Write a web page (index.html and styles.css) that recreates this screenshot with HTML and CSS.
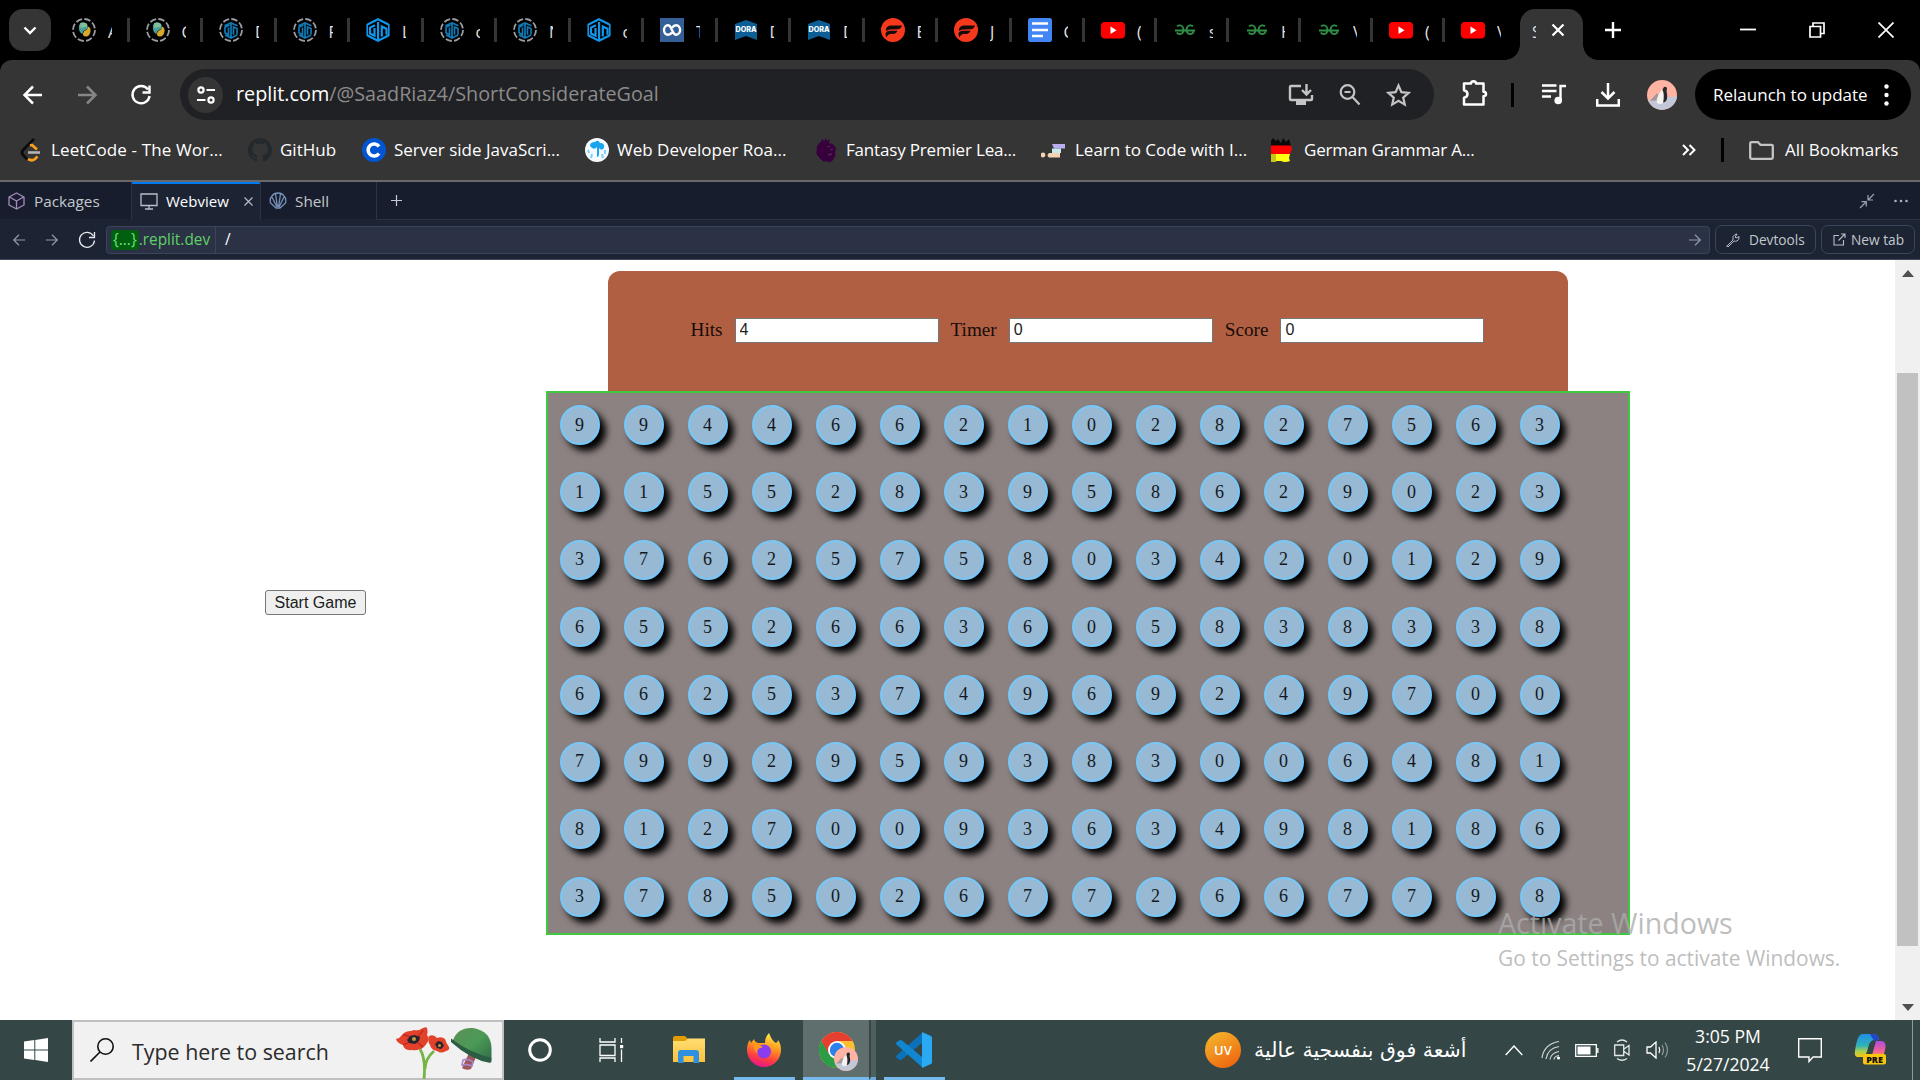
FILE: index.html
```html
<!DOCTYPE html>
<html lang="en">
<head>
<meta charset="utf-8">
<title>ShortConsiderateGoal</title>
<link rel="stylesheet" href="styles.css">
</head>
<body>
<svg class="defs" width="0" height="0">
  <defs>
    <linearGradient id="gPy" x1="0" y1="0" x2="1" y2="1"><stop offset="0" stop-color="#6fb36a"/><stop offset=".5" stop-color="#2f8fb0"/><stop offset=".6" stop-color="#e0b020"/><stop offset="1" stop-color="#c9a018"/></linearGradient>
    <linearGradient id="gUv" x1="0.2" y1="0" x2=".8" y2="1"><stop offset="0" stop-color="#f3b52d"/><stop offset="1" stop-color="#f0620c"/></linearGradient>
    <linearGradient id="gFox" x1=".7" y1="0" x2=".4" y2="1"><stop offset="0" stop-color="#fff04a"/><stop offset=".4" stop-color="#ff9a1f"/><stop offset=".75" stop-color="#ff3b42"/><stop offset="1" stop-color="#e5178b"/></linearGradient>
    <linearGradient id="gFolder" x1="0" y1="0" x2="0" y2="1"><stop offset="0" stop-color="#ffdd72"/><stop offset="1" stop-color="#f9c33c"/></linearGradient>
    <linearGradient id="gHelm" x1="0" y1="0" x2="1" y2="1"><stop offset="0" stop-color="#5c8f58"/><stop offset=".5" stop-color="#4c9a55"/><stop offset="1" stop-color="#2f6b48"/></linearGradient>
    <linearGradient id="gCoA" x1="0" y1="0" x2="0" y2="1"><stop offset="0" stop-color="#1f8fe8"/><stop offset=".5" stop-color="#2fb3b8"/><stop offset=".75" stop-color="#a8cf50"/><stop offset="1" stop-color="#f5c518"/></linearGradient>
    <linearGradient id="gCoB" x1="0" y1="0" x2="0" y2="1"><stop offset="0" stop-color="#b04be0"/><stop offset=".6" stop-color="#f0609a"/><stop offset="1" stop-color="#f7a04a"/></linearGradient>
    <symbol id="py" viewBox="0 0 24 24"><circle cx="12" cy="12" r="11" fill="none" stroke="#9a9da3" stroke-width="1.8" stroke-dasharray="6.4 2.24"/><path d="M8 5.500q3-2 7 .5l1 4.500-3 1.500q-2.500 1-2.500 4-3-1-3.500-5-.5-4 1-5.500z" fill="#4a9f9a"/><path d="M8 5.500q3-2 7 .5l.5 2.500-7 1.500z" fill="#7fbf9a"/><path d="M16 8.500q3 1 2.500 5-1 5-4.500 5t-3-3q.5-3 3-3.500 2-.5 2-3.500z" fill="#d6a92b"/></symbol>
    <symbol id="ringct" viewBox="0 0 24 24"><circle cx="12" cy="12" r="11" fill="none" stroke="#9a9da3" stroke-width="1.8" stroke-dasharray="6.4 2.24"/><path d="M10.500 7 6 9.200v5.600l3.500 2V9.500M12 5v14M14.500 16.800V9l3.500 1.500v6M5.500 7.800 12 5l6.500 2.800M6 17l6 3 6-3" fill="none" stroke="#0f7ab5" stroke-width="1.700"/></symbol>
    <symbol id="ct" viewBox="0 0 24 24"><path d="M9 7.200 4 9.600v6l4.500 2.200V10M12.100 4v18M15.800 18.500V8.500l4.700 2.300v6M1.500 6.500 12 1.300l10.500 5.200M1.500 17.500l10.500 5.200 10.500-5.200" fill="none" stroke="#1196ea" stroke-width="2.200"/><path d="M1.200 6v12M22.800 6v12" stroke="#1196ea" stroke-width="1.600"/></symbol>
    <symbol id="loop" viewBox="0 0 24 24"><path fill="#355f97" d="M0 0h24v24H0z"/><path d="M12 14.500C11 16 9.800 16.700 8 16.700c-2.400 0-4-2-4-4.600s1.600-4.800 4-4.800c4 0 4 9.400 8.200 9.400 2.300 0 3.900-2.100 3.900-4.600s-1.600-4.800-3.900-4.800c-1.800 0-3 .8-4 2.400" fill="none" stroke="#fff" stroke-width="2.400"/></symbol>
    <symbol id="dora" viewBox="0 0 24 24"><path d="M1 6 12 2l11 4v16l-11-4-11 4z" fill="#0c5f96"/><text x="12" y="14" font-size="7.200" font-weight="800" text-anchor="middle" fill="#fff" font-family="Inter,sans-serif">DORA</text></symbol>
    <symbol id="flash" viewBox="0 0 24 24"><circle cx="12" cy="12" r="12" fill="#f6391d"/><path d="M5 11q1-3.500 5-3.500h11q-1 3.500-4.500 3.700L9 11.500q-2 0-4 1.500zM4.500 15q1.500-2.300 4.500-2.300h7.500q-1 3-4.500 3.300H9q-2 0-4 3.500z" fill="#150a0a"/></symbol>
    <symbol id="docs" viewBox="0 0 24 24"><rect width="24" height="24" rx="2.500" fill="#4285f4"/><path d="M4 5.500h16M4 12h16M4 18h11" stroke="#fff" stroke-width="2.600"/></symbol>
    <symbol id="yt" viewBox="0 0 24 24"><rect y="4" width="24" height="16.500" rx="4" fill="#f00"/><path d="m9.500 8.500 6 3.700-6 3.700z" fill="#fff"/></symbol>
    <symbol id="gfg" viewBox="0 0 24 24"><path d="M2 12.500h20M4 8.200c2-1.500 5-1 6 1.300.8 2 .5 4.500-.8 5.700-1.600 1.400-4.500 1-5.500-.7M20 8.200c-2-1.500-5-1-6 1.300-.8 2-.5 4.500.8 5.700 1.600 1.400 4.500 1 5.500-.7v-2" fill="none" stroke="#2f8d46" stroke-width="1.800"/></symbol>
    <symbol id="back" viewBox="0 0 24 24"><path d="M21 12H4M12 3.500 3.500 12l8.500 8.500" fill="none" stroke="currentColor" stroke-width="2.500"/></symbol>
    <symbol id="fwd" viewBox="0 0 24 24"><path d="M3 12h17M12 3.500l8.500 8.500-8.500 8.500" fill="none" stroke="currentColor" stroke-width="2.500"/></symbol>
    <symbol id="reload" viewBox="0 0 24 24"><path d="M19 6.500A8.600 8.600 0 1 0 20.600 13M20.500 2.500v7h-7" fill="none" stroke="currentColor" stroke-width="2.400"/></symbol>
    <symbol id="thinback" viewBox="0 0 16 16"><path d="M15 8H2M8 2 2 8l6 6" fill="none" stroke="currentColor" stroke-width="1.400"/></symbol>
    <symbol id="thinfwd" viewBox="0 0 16 16"><path d="M1 8h13M8 2l6 6-6 6" fill="none" stroke="currentColor" stroke-width="1.400"/></symbol>
    <symbol id="penguin" viewBox="0 0 30 30"><circle cx="15" cy="15" r="15" fill="#ffb3a3"/><path d="M1 20 30 16A15 15 0 0 1 1 20z" fill="#c3c8d8"/><path d="m3 21 7-8 4 7z" fill="#a5989a"/><path d="M14 23q2-4 1-10 0-4 2-6 3-1 3 2-1 2 0 5 1 5-2 8z" fill="#26282b"/><path d="M10 23q-1-4 2-9 2-3 3-5 3 5 1 14-3 2-6 0z" fill="#f4f1ef"/></symbol>
  </defs>
</svg>

<header class="tabstrip">
  <div class="tab-search"><svg width="14" height="9" viewBox="0 0 14 9"><path d="M1.500 1.500 7 7l5.500-5.500" fill="none" stroke="#fff" stroke-width="2.400"/></svg></div>
  <nav class="tabs">
    <div class="tab"><svg><use href="#py"/></svg><span>A</span></div>
    <div class="tab"><svg><use href="#py"/></svg><span>C</span></div>
    <div class="tab"><svg><use href="#ringct"/></svg><span>D</span></div>
    <div class="tab"><svg><use href="#ringct"/></svg><span>F</span></div>
    <div class="tab"><svg><use href="#ct"/></svg><span>L</span></div>
    <div class="tab"><svg><use href="#ringct"/></svg><span>c</span></div>
    <div class="tab"><svg><use href="#ringct"/></svg><span>N</span></div>
    <div class="tab"><svg><use href="#ct"/></svg><span>c</span></div>
    <div class="tab"><svg><use href="#loop"/></svg><span>T</span></div>
    <div class="tab"><svg><use href="#dora"/></svg><span>D</span></div>
    <div class="tab"><svg><use href="#dora"/></svg><span>D</span></div>
    <div class="tab"><svg><use href="#flash"/></svg><span>E</span></div>
    <div class="tab"><svg><use href="#flash"/></svg><span>J</span></div>
    <div class="tab"><svg><use href="#docs"/></svg><span>C</span></div>
    <div class="tab slim"><svg><use href="#yt"/></svg><span>(</span></div>
    <div class="tab slim"><svg><use href="#gfg"/></svg><span>s</span></div>
    <div class="tab slim"><svg><use href="#gfg"/></svg><span>H</span></div>
    <div class="tab slim"><svg><use href="#gfg"/></svg><span>V</span></div>
    <div class="tab slim"><svg><use href="#yt"/></svg><span>(</span></div>
    <div class="tab slim last"><svg><use href="#yt"/></svg><span>V</span></div>
  </nav>
  <div class="tab-active"><span>S</span><svg width="14" height="14" viewBox="0 0 14 14"><path d="m1.500 1.500 11 11m0-11-11 11" stroke="#fff" stroke-width="2.200"/></svg></div>
  <svg class="newtab" width="18" height="18" viewBox="0 0 18 18"><path d="M9 1v16M1 9h16" stroke="#fff" stroke-width="2.400"/></svg>
  <div class="winbtns">
    <svg width="16" height="16" viewBox="0 0 16 16"><path d="M0 7.500h16" stroke="#fff" stroke-width="1.800"/></svg>
    <svg width="16" height="16" viewBox="0 0 16 16"><path d="M1 4.500h10.500V15H1zM4 4V1h11v10.500h-3" fill="none" stroke="#fff" stroke-width="1.700"/></svg>
    <svg width="16" height="16" viewBox="0 0 16 16"><path d="m.5.500 15 15m0-15-15 15" stroke="#fff" stroke-width="1.700"/></svg>
  </div>
</header>

<section class="chrome">
  <div class="toolbar">
    <div class="nav">
      <svg class="i24"><use href="#back"/></svg>
      <svg class="i24 dim"><use href="#fwd"/></svg>
      <svg class="i24"><use href="#reload"/></svg>
    </div>
    <div class="omnibox">
      <div class="site"><svg width="20" height="20" viewBox="0 0 20 20"><g fill="none" stroke="#fff" stroke-width="2.200"><circle cx="5" cy="5" r="2.600"/><path d="M10.500 5H19M1 15h8.500"/><circle cx="15" cy="15" r="2.600"/></g></svg></div>
      <div class="url"><span class="t"><b>replit.com</b>/@SaadRiaz4/ShortConsiderateGoal</span></div>
      <div class="omni-icons">
        <svg width="26" height="24" viewBox="0 0 26 24"><path d="M13 3H3q-1 0-1 1v12q0 1 1 1h20q1 0 1-1v-4M18.500 1v10M14 7l4.500 4.500L23 7" fill="none" stroke="#c4c4c4" stroke-width="2.400"/><path d="M8 18h10v4H8z" fill="#c4c4c4"/></svg>
        <svg width="24" height="24" viewBox="0 0 24 24"><circle cx="9.500" cy="9" r="6.800" fill="none" stroke="#c4c4c4" stroke-width="2.200"/><path d="m14.500 14 7 7.500M6.500 9h6" stroke="#c4c4c4" stroke-width="2.200"/></svg>
        <svg width="25" height="24" viewBox="0 0 25 24"><path d="m12.500 2.500 2.900 6.600 7.200.7-5.400 4.800 1.600 7-6.300-3.700-6.300 3.700 1.600-7-5.400-4.800 7.200-.7z" fill="none" stroke="#c4c4c4" stroke-width="2.200"/></svg>
      </div>
    </div>
    <div class="right-tools">
      <svg class="puzzle" width="26" height="28" viewBox="0 0 26 28"><path d="M2 4.500h7q0-2 2.500-2.200Q14 2.500 14 4.500h7.500v8.300q2.500.2 2.500 2.200t-2.500 2.200v8.300H2v-6.700q3.500-.8 3.500-3.800T2 11.200z" fill="none" stroke="#fff" stroke-width="2.500" stroke-linejoin="round"/></svg>
      <i class="vbar"></i>
      <svg class="media" width="24" height="24" viewBox="0 0 24 24"><path d="M0 2.500h14.500M0 8h14.500M0 13.500h9M18.500 17V3H24" fill="none" stroke="#fff" stroke-width="2.400"/><circle cx="16.200" cy="17.500" r="3.800" fill="#fff"/></svg>
      <svg class="dl" width="24" height="24" viewBox="0 0 24 24"><path d="M12 0v15M5.500 9l6.500 6.500L18.500 9M1.200 16v6.500h21.600V16" fill="none" stroke="#fff" stroke-width="2.500"/></svg>
      <svg class="avatar" width="30" height="30"><use href="#penguin"/></svg>
      <div class="relaunch"><span class="t">Relaunch to update</span><svg width="5" height="22" viewBox="0 0 5 22"><g fill="#fff"><circle cx="2.500" cy="2.500" r="2.200"/><circle cx="2.500" cy="11" r="2.200"/><circle cx="2.500" cy="19.500" r="2.200"/></g></svg></div>
    </div>
  </div>
  <div class="bookmarks">
    <a class="bm b1"><svg width="24" height="24" viewBox="0 0 24 24"><path d="M15 1 4.500 11.500q-3 3 0 6l4 4" fill="none" stroke="#0b0b0b" stroke-width="2.800"/><path d="m11 7.500 2-.5 5 4.500M9 21q4 2.500 7 0l2.500-2.500" fill="none" stroke="#f89f1b" stroke-width="2.700"/><path d="M9 14.500h12" stroke="#b3b3b3" stroke-width="2.600"/></svg><span class="t">LeetCode - The Wor...</span></a>
    <a class="bm b2"><svg width="24" height="24" viewBox="0 0 16 16"><path fill="#24292e" d="M8 0C3.580 0 0 3.580 0 8c0 3.540 2.290 6.530 5.470 7.590.4.070.55-.17.55-.38 0-.19-.01-.82-.01-1.490-2.010.37-2.530-.49-2.690-.94-.09-.23-.48-.94-.82-1.130-.28-.15-.68-.52-.01-.53.63-.01 1.080.58 1.230.82.72 1.210 1.870.87 2.330.66.07-.52.28-.87.51-1.070-1.780-.2-3.640-.89-3.640-3.950 0-.87.31-1.590.82-2.150-.08-.2-.36-1.020.08-2.120 0 0 .67-.21 2.200.82.64-.18 1.320-.27 2-.27s1.360.09 2 .27c1.530-1.040 2.200-.82 2.200-.82.44 1.100.16 1.920.08 2.120.51.56.82 1.270.82 2.150 0 3.070-1.870 3.750-3.650 3.950.29.25.54.73.54 1.480 0 1.070-.01 1.930-.01 2.200 0 .21.15.46.55.38A8.010 8.010 0 0 0 16 8c0-4.420-3.580-8-8-8z"/></svg><span class="t">GitHub</span></a>
    <a class="bm b3"><svg width="24" height="24" viewBox="0 0 24 24"><circle cx="12" cy="12" r="12" fill="#0056d2"/><path d="M17 8.500a6 6 0 1 0 0 7" fill="none" stroke="#fff" stroke-width="3.600"/></svg><span class="t">Server side JavaScri...</span></a>
    <a class="bm b4"><svg width="24" height="24" viewBox="0 0 24 24"><circle cx="12" cy="12" r="12" fill="#f4fafd"/><path d="M5 8q0-4 5-4 3-3 5 1 5 0 4 5-3 3-5 0v6q0 3-2 3V9q-3 4-7-1z" fill="#18a5ee"/><path d="m7 16-1 4m11-4 1 4M3 12l1 3m16-3v4" stroke="#7cd0f7" stroke-width="2"/></svg><span class="t">Web Developer Roa...</span></a>
    <a class="bm b5"><svg width="24" height="24" viewBox="0 0 24 24"><path d="m8 1 2 2 2-3 1 3 3-2-1 4q6 1 7 6l-1 3q1 5-1 6-2 5-6 4l-2-1q-2 2-4-1-2 0-3-3-4-3-2-7-1-3 1-5 0-2 3-3z" fill="#37003c"/><path d="m13 9 3-1m0 4 3-1m-5 6 4-1" stroke="#4b2b4e" stroke-width="1.300"/></svg><span class="t snug">Fantasy Premier Lea...</span></a>
    <a class="bm b6"><svg width="24" height="24" viewBox="0 0 24 24"><path d="M11 6h13v4.500H13z" fill="#b9adf2"/><path d="M11 10.500h9V15h-9z" fill="#c8e8ea"/><path d="M8 15h11v4.500H8q-3-2 0-4.500z" fill="#f5d2b3"/><circle cx="2" cy="17" r="2.400" fill="#f5d2b3"/></svg><span class="t">Learn to Code with I...</span></a>
    <a class="bm b7"><svg width="21" height="24" viewBox="0 0 21 24"><path d="m2 0 3 3 2-2 3 4 2-5 3 4 3-3 2 7H0V3z" fill="#0a0a0a"/><path d="M0 7.500h20l1 4-2 4.500H0z" fill="#f00"/><path d="M0 16h19l-1 4 1 3q-5 2-9 0H0z" fill="#ff1"/><path d="M0 16h5v8H0z" fill="#c7c516"/></svg><span class="t snug">German Grammar A...</span></a>
    <div class="bm-end">
      <svg width="14" height="12" viewBox="0 0 14 12"><path d="m1 1 5 5-5 5m6.500-10 5 5-5 5" fill="none" stroke="#fff" stroke-width="2"/></svg>
      <i class="vbar"></i>
      <svg class="folder" width="25" height="19" viewBox="0 0 25 19"><path d="M1.200 16.500V2.500q0-1.300 1.300-1.300H9l2.500 2.600H22.500q1.300 0 1.300 1.300v11.400q0 1.300-1.300 1.300h-20q-1.300 0-1.300-1.300z" fill="none" stroke="#c4c4c4" stroke-width="2.300"/></svg>
      <span class="t">All Bookmarks</span>
    </div>
  </div>
</section>

<section class="panes">
  <div class="pane p-pack"><svg width="17" height="18" viewBox="0 0 17 18"><path d="M8.500 1 1 5v8l7.500 4 7.500-4V5zM1.500 5l7 4 7-4M8.500 9v8" fill="none" stroke="#a78bbf" stroke-width="1.300" stroke-linejoin="round"/></svg><span class="t">Packages</span></div>
  <div class="pane p-web"><svg width="18" height="17" viewBox="0 0 18 17"><path d="M1 1h16v11.500H1zM5 16h8M9 13v3" fill="none" stroke="#b9bec9" stroke-width="1.300"/></svg><span class="t">Webview</span><svg class="x" width="9" height="9" viewBox="0 0 9 9"><path d="m.5.500 8 8m0-8-8 8" stroke="#b9bec9" stroke-width="1.100"/></svg></div>
  <div class="pane p-shell"><svg width="18" height="17" viewBox="0 0 18 17"><path d="M7 16 1.500 11Q.5 6 3 4q2-3 6-3t6 3q2.500 2 1.500 7L11 16zM8 15 3 5M8.500 15 6.500 2M9.500 15l2-13M10 15l5-10" fill="none" stroke="#7791b8" stroke-width="1.300"/></svg><span class="t">Shell</span></div>
  <div class="pane-rest">
    <svg width="11" height="11" viewBox="0 0 11 11"><path d="M5.500 0v11M0 5.500h11" stroke="#c5cad4" stroke-width="1.200"/></svg>
    <svg class="shrink" width="16" height="16" viewBox="0 0 16 16"><path d="M1 15l6-6M2.500 8.700h4.800v4.800M15 1 9.500 6.500M14 7H9V2" fill="none" stroke="#9ba2b2" stroke-width="1.200"/></svg>
    <svg class="dots" width="14" height="4" viewBox="0 0 14 4"><g fill="#a9afbd"><circle cx="1.500" cy="2" r="1.300"/><circle cx="7" cy="2" r="1.300"/><circle cx="12.500" cy="2" r="1.300"/></g></svg>
  </div>
</section>

<section class="address">
  <div class="anav">
    <svg width="14" height="14"><use href="#thinback"/></svg>
    <svg width="14" height="14"><use href="#thinfwd"/></svg>
    <svg class="bright" width="18" height="18" viewBox="0 0 18 18"><path d="M15.500 5A7.500 7.500 0 1 0 16.500 9.500M16.500 1v5.500H11" fill="none" stroke="currentColor" stroke-width="1.300"/></svg>
  </div>
  <div class="afield">
    <div class="host"><span class="t"><em>{...}</em>.replit.dev</span></div>
    <div class="path">/</div>
    <svg width="14" height="14"><use href="#thinfwd"/></svg>
  </div>
  <div class="btn b-dev"><svg width="14" height="14" viewBox="0 0 14 14"><path d="m1 13 6-6q-1-4 2-5.500l2-.5-1.800 3 .8 1 3-1.500q.5 3.500-2 4.500-1.500.5-3 0l-6 6q-2 0-1-1z" fill="none" stroke="#b9bec9" stroke-width="1"/></svg><span class="t">Devtools</span></div>
  <div class="btn b-new"><svg width="13" height="13" viewBox="0 0 13 13"><path d="M6 2.500H1V12h9.500V7M8 1h4v4M12 1 5.500 7.500" fill="none" stroke="#b9bec9" stroke-width="1.100"/></svg><span class="t">New tab</span></div>
</section>

<main class="webview">
  <div class="page">
    <div class="side"><button class="start">Start Game</button></div>
    <div class="game">
      <div class="stats">
        <label>Hits</label><input value="4">
        <label>Timer</label><input value="0">
        <label>Score</label><input value="0">
      </div>
      <div class="board" id="board"></div>
    </div>
    <div class="watermark"><div>Activate Windows</div><p>Go to Settings to activate Windows.</p></div>
  </div>
  <div class="scroll">
    <svg width="12" height="7" viewBox="0 0 12 7"><path d="M6 0 12 7H0z" fill="#505050"/></svg>
    <i class="thumb"></i>
    <svg width="12" height="7" viewBox="0 0 12 7"><path d="M0 0h12L6 7z" fill="#505050"/></svg>
  </div>
</main>

<footer class="taskbar">
  <div class="win"><svg width="24" height="24" viewBox="0 0 24 24"><path fill="#fff" d="M0 3.500 10.300 2v9.500H0zM11.300 1.900 24 0v11.500H11.300zM0 12.500h10.300V22L0 20.500zM11.300 12.500H24V24l-12.700-1.900z"/></svg></div>
  <div class="search">
    <svg width="24" height="24" viewBox="0 0 24 24"><circle cx="15.500" cy="8.500" r="7.700" fill="none" stroke="#111" stroke-width="1.600"/><path d="M10 14 .5 23.500" stroke="#111" stroke-width="1.600"/></svg>
    <span class="t">Type here to search</span>
    <svg class="art" width="98" height="52" viewBox="0 0 98 52"><path d="M24 22q6 10 4 30M38 24q-9 8-9 18" fill="none" stroke="#74b544" stroke-width="2.800"/><path d="M0 12q4-1 6-4 3-4 9-4l3-1q5 1 7-1 5-3 6-1 1 4 0 7 3 4 0 8-4 6-7 6-4 2-8 1-8 1-9-5-6-2-7-6z" fill="#e4412a"/><path d="M7 8q5 0 11 5M27 3q-3 6-9 9M7 18l11-5 9 7" fill="none" stroke="#bb2a1f" stroke-width="1.300"/><path d="m11 13 3-4 5-1 5 2-1 4-4 3-6-1z" fill="#28242f"/><circle cx="18" cy="12" r="2" fill="#c79a3b"/><path d="M33 9q5-2 8 2 5-2 8 1 1 4 4 8 1 3-3 4-5 3-9 0-6-1-7-6-3-5-1-9z" fill="#e4412a"/><path d="m39 17 3-3 4 1 2 4-3 3-4-1z" fill="#28242f"/><circle cx="43.500" cy="18.500" r="1.500" fill="#c79a3b"/><path d="m73 26 7 4-5 12q-5 2-9-1z" fill="#a0575a"/><path d="M67 33q5-2 10 2l-1 4q-5-2-10-1z" fill="none" stroke="#a886cf" stroke-width="1.600"/><path d="M57 13Q62 0 77 1q18 3 18.500 20v14L76 30 57 16z" fill="url(#gHelm)"/><path d="M55 11.500q18 14 40.500 19.500l-1 5Q75 33 55 15z" fill="#2c5c44"/></svg>
  </div>
  <div class="app cort"><svg width="24" height="24" viewBox="0 0 24 24"><circle cx="12" cy="12" r="10.300" fill="none" stroke="#fff" stroke-width="3"/></svg></div>
  <div class="app tv"><svg width="26" height="24" viewBox="0 0 26 24"><path d="M1 0v4h15V0M1 24v-4h15v4M1 7h15v10.500H1zM22.500 0v5M22.500 11.500V24" fill="none" stroke="#fff" stroke-width="1.300"/><path d="M21 7h3.200v3.200H21z" fill="#fff"/></svg></div>
  <div class="app fe"><svg width="32" height="28" viewBox="0 0 32 28"><path d="M0 2q0-2 2-2h10l3 3v4H0z" fill="#e09b07"/><path d="M0 5h12l3-2.500h17V26H0z" fill="url(#gFolder)"/><path d="M5 27V17q0-3 3-3h15q3 0 3 3v10h-5.500v-7h-10v7z" fill="#2f8fe0"/></svg></div>
  <div class="app fx on"><svg width="34" height="34" viewBox="0 0 34 34"><path d="M17 34A17 17 0 0 1 0 17q0-7 3-10l1 3 3-4q1 4 5 4h6q0-6 4-10 3 8 7 10 2-1 2-3 3 4 3 10a17 17 0 0 1-17 17z" fill="url(#gFox)"/><circle cx="17" cy="18.500" r="7" fill="#8a3df0"/><path d="M7 10q5 4 9 3-1 2-4 2.500-3 2-1 5-5-2-4-10z" fill="#ff9a1f"/></svg></div>
  <div class="app ch on"><svg width="40" height="40" viewBox="0 0 40 40"><circle cx="18" cy="18" r="18" fill="#fbc12d"/><path d="M2.400 9A18 18 0 0 1 33.600 9H18L9 22z" fill="#e63e30"/><path d="M2.400 9A18 18 0 0 0 18 36l8-13-16-1z" fill="#2a9d46"/><circle cx="18" cy="18" r="9" fill="#fff"/><circle cx="18" cy="18" r="7.200" fill="#2e80ea"/><svg x="15" y="15" width="24" height="24" viewBox="0 0 30 30"><use href="#penguin" width="30" height="30"/></svg></svg></div>
  <div class="ch-more"></div>
  <div class="app vs on"><svg width="36" height="36" viewBox="0 0 36 36"><path d="M26 1 1 23q-2 2 0 3l2 1.500q1.500 1 3 0L26 11z" fill="#0b72b9"/><path d="M26 35 1 13q-2-2 0-3l2-1.500q1.500-1 3 0L26 25z" fill="#1187d2"/><path d="M26 0l9 4q1 .6 1 2v24q0 1.400-1 2l-9 4z" fill="#2aaaf2"/></svg></div>
  <div class="tray">
    <div class="weather"><svg width="36" height="36" viewBox="0 0 36 36"><circle cx="18" cy="18" r="18" fill="url(#gUv)"/><text x="18" y="22.500" font-size="13" font-weight="600" text-anchor="middle" fill="#fff" font-family="Open Sans,sans-serif">UV</text></svg><span class="t ar" dir="rtl">أشعة فوق بنفسجية عالية</span></div>
    <svg class="chev" width="18" height="11" viewBox="0 0 18 11"><path d="m.7 10 8.300-9 8.300 9" fill="none" stroke="#fff" stroke-width="1.400"/></svg>
    <svg class="wifi" width="20" height="20" viewBox="0 0 20 20"><g fill="none" stroke="#cfd5d5" stroke-width="1.200"><path d="M1 18Q3 4 18 1.500M5 19Q6.500 8.500 18 6.500M9 19.500Q10 13 18 11.500M13 19.500q.5-3.500 5-4"/></g><circle cx="17.500" cy="18" r="1.600" fill="#fff"/></svg>
    <svg class="bat" width="24" height="13" viewBox="0 0 24 13"><path d="M.7.700h20.600v11.600H.7zM22.800 4v5" fill="none" stroke="#fff" stroke-width="1.300"/><path d="M2.500 2.500h13v8h-13z" fill="#fff"/></svg>
    <svg class="meet" width="18" height="22" viewBox="0 0 18 22"><path d="M1.700 6h9v10.500h-9zM11 10l5-3.500v9.500L11 12.500M4 3q5-4 10 0M4 19.500q5 3.500 10 0" fill="none" stroke="#e4e8e8" stroke-width="1.300"/></svg>
    <svg class="spk" width="23" height="18" viewBox="0 0 23 18"><path d="M1 6h3.500L10 1v16l-5.500-5H1z" fill="none" stroke="#fff" stroke-width="1.300"/><path d="M13 6q1.500 3 0 6" fill="none" stroke="#fff" stroke-width="1.200"/><path d="M16 4q3 5 0 10M19 1.500q5 7.500 0 15" fill="none" stroke="#8f9b9b" stroke-width="1.200"/></svg>
    <div class="clock"><span class="t">3:05 PM</span><span class="t">5/27/2024</span></div>
    <svg class="note" width="24" height="25" viewBox="0 0 24 25"><path d="M.7.700h22.600V19H15l-4 4.500V19H.7z" fill="none" stroke="#fff" stroke-width="1.400"/></svg>
    <svg class="cop" width="34" height="32" viewBox="0 0 34 32"><path d="M8 0h12q4 0 5 6h-6q-4 2-5 8-2 8-5 9H3q-3-1-2-6Q3 1 8 0z" fill="url(#gCoA)"/><path d="M16 0h4q4 0 5 6l-5 1z" fill="#2447c9"/><path d="M22 7h6q4 1 3.500 6-1 9-5 10h-9z" fill="url(#gCoB)"/><rect x="9" y="20" width="23" height="10.500" rx="2" fill="#f8c60b"/><text x="20.500" y="28.500" font-size="9" font-weight="800" text-anchor="middle" fill="#111" font-family="Open Sans,sans-serif">PRE</text></svg>
    <i class="peek"></i>
  </div>
</footer>
<script src="script.js"></script>
</body>
</html>
```
FILE: styles.css
```css
* { box-sizing: border-box; }
html, body { margin: 0; height: 100%; overflow: hidden; }
body { display: flex; flex-direction: column; width: 1920px; height: 1080px; background: linear-gradient(#000 100px, #fff 100px); font-family: "Open Sans", "Noto Sans", sans-serif; }
.defs { position: absolute; }
svg { display: block; flex: none; }
.t { white-space: nowrap; display: inline-block; }

/* tab strip */
.tabstrip { height: 60px; background: #000; display: flex; flex: none; align-items: center; }
.tab-search { width: 42px; height: 42px; margin-left: 9px; border-radius: 14px; background: #353535; display: flex; align-items: center; justify-content: center; }
.tabs { display: flex; margin-left: 5px; width: 1464px; }
.tab { width: 73.5px; height: 24px; display: flex; align-items: center; padding-left: 16px; border-right: 3px solid #353535; flex: none; }
.tab.slim { width: 72px; }
.tab.last { border-color: transparent; }
.tab svg { width: 24px; height: 24px; }
.tab span { font-size: 16px; line-height: 20px; color: #fff; width: 4px; overflow: hidden; margin: 3px 0 0 12px; opacity: .9; }
.tab-active { width: 63px; height: 51px; margin-top: 9px; background: #353535; border-radius: 15px 15px 0 0; position: relative; z-index: 1; display: flex; align-items: center; padding: 0 0 9px 12px; }
.tab-active::before, .tab-active::after { content: ""; position: absolute; bottom: 0; width: 15px; height: 15px; }
.tab-active::before { left: -15px; background: radial-gradient(circle at 0 0, #000 14.500px, #353535 15px); }
.tab-active::after { right: -15px; background: radial-gradient(circle at 100% 0, #000 14.500px, #353535 15px); }
.tab-active span { font-size: 16px; color: #ddd; width: 4px; overflow: hidden; margin: 3px 15px 0 0; }
.newtab { margin-left: 21px; }
.winbtns { display: flex; gap: 53px; margin-left: 118px; }

/* toolbar */
.chrome { height: 122px; flex: none; background: #353535; border-bottom: 2px solid #696969; border-radius: 12px 12px 0 0; }
.toolbar { display: flex; align-items: center; padding-top: 9px; height: 60px; color: #fff; }
.nav { display: flex; gap: 30px; margin-left: 21px; width: 159px; }
.i24 { width: 24px; height: 24px; }
.dim { color: #868686; }
.omnibox { width: 1254px; height: 51px; background: #202124; border-radius: 26px; display: flex; align-items: center; padding-left: 8px; }
.site { width: 35px; height: 36px; border-radius: 50%; background: #353535; display: flex; align-items: center; justify-content: center; }
.url { margin-left: 13px; color: #8b8b8b; font-size: 19.800px; flex: 1; margin-top: -2px; }
.url b { font-weight: 400; color: #fff; }
.omni-icons { display: flex; gap: 24px; margin-right: 23px; }
.right-tools { display: flex; align-items: center; height: 51px; }
.puzzle { margin: -3px 0 0 28px; }
.vbar { width: 3px; height: 24px; background: #000; }
.puzzle + .vbar { margin-left: 23px; }
.media { margin-left: 28px; }
.dl { margin-left: 30px; }
.avatar { margin-left: 27px; }
.relaunch { margin-left: 18px; width: 216px; height: 51px; border-radius: 26px; background: #000; display: flex; align-items: center; justify-content: space-between; padding: 0 22px 0 18px; font-size: 17px; }

.bookmarks { display: flex; align-items: center; height: 60px; font-size: 17px; color: #fff; padding-left: 19px; }
.bm { display: flex; align-items: center; gap: 8px; flex: none; }
.bm .t { width: 170px; margin-top: -2px; }
.bm .snug { letter-spacing: -.18px; }
.b1 { width: 229px; letter-spacing: .13px; }
.b2 { width: 114px; }
.b3 { width: 223px; }
.b4 { width: 229px; }
.b5 { width: 227px; }
.b6 { width: 230px; gap: 10px; }
.b7 { width: 411px; gap: 12px; }
.bm-end { display: flex; align-items: center; }
.bm-end .t { margin-top: -2px; }
.bm-end .vbar { margin-left: 25px; }
.folder { margin: 0 11px 0 25px; }

/* workspace panes */
.panes { height: 38px; flex: none; background: #171d2d; display: flex; font-size: 15.300px; color: #c2c8cc; }
.pane { display: flex; align-items: center; border-bottom: 1px solid #1c2333; }
.p-pack { width: 131px; padding-left: 8px; gap: 9px; }
.p-web { width: 130px; background: #1c2333; border: solid #2b3245; border-width: 0 1px; box-shadow: inset 0 2px #0079f2; padding-left: 8px; gap: 8px; color: #fff; font-size: 15px; }
.p-web .x { margin-left: 7px; }
.p-shell { width: 115px; padding-left: 8px; gap: 8px; }
.pane-rest { flex: 1; border: solid #2b3245; border-width: 0 0 1px 1px; display: flex; align-items: center; padding: 0 12px 0 14px; gap: 19px; }
.shrink { margin-left: auto; }

/* address row */
.address { height: 40px; flex: none; background: #1c2333; border-bottom: 1px solid #454b5c; display: flex; align-items: center; color: #9298a8; font-size: 15.400px; }
.anav { display: flex; align-items: center; gap: 18px; padding-left: 12px; width: 106px; }
.anav svg + svg { margin-left: 1px; }
.bright { color: #e8eaee; }
.afield { width: 1604px; height: 28px; background: #2b3245; border: 1px solid #3c445c; border-radius: 4px; display: flex; align-items: center; padding-right: 7px; }
.host { width: 109px; height: 26px; border-right: 1px solid #3c445c; padding-left: 4px; color: #5fd068; line-height: 26px; }
.host em { font-style: normal; background: #00600f; color: #6fe07a; border-radius: 4px; padding: 1px 2px; display: inline-block; line-height: 18px; }
.path { flex: 1; color: #fff; padding-left: 9px; }
.btn { height: 29px; border: 1px solid #3c445c; border-radius: 7px; display: flex; align-items: center; color: #c2c8cc; font-size: 13.700px; }
.b-dev { margin-left: 5px; width: 101px; padding-left: 10px; gap: 9px; }
.b-new { margin-left: 5px; width: 94px; padding-left: 11px; gap: 5px; }

/* game page */
.webview { height: 760px; flex: none; display: flex; background: #fff; }
.page { width: 1895px; display: flex; position: relative; }
.side { width: 546px; padding: 330px 0 0 265px; }
.start { width: 101px; height: 25px; font: 16px "Liberation Sans", Arial, sans-serif; background: #efefef; border: 1px solid #767676; border-radius: 3px; padding: 0; display: block; color: #1c1c1c; }
.game { width: 1084px; padding-top: 11px; display: flex; flex-direction: column; align-items: center; }
.stats { width: 960px; height: 120px; background: #b15f42; border-radius: 12px 12px 0 0; display: flex; align-items: center; justify-content: center; gap: 12px; font: 19.200px "Liberation Serif", "Times New Roman", serif; color: #160c08; padding: 0 1px 2px 0; }
.stats input { width: 204px; height: 25px; border: 1px solid #767676; background: #fff; font: 16px "Liberation Sans", Arial, sans-serif; padding: 0 0 1px 4px; border-radius: 0; color: #222; }
.board { width: 1084px; height: 543.500px; background: #8b8281; border: 2px solid #3fc83f; display: grid; grid-template-columns: repeat(16, 40px); grid-auto-rows: 40px; gap: 27.400px 24px; padding: 12px; align-content: start; }
.cell { border: 2px solid #76c8fa; border-radius: 50%; background: #97b9d3; box-shadow: 6px 6px 7px #000; display: flex; align-items: center; justify-content: center; font: 18px "Liberation Serif", "Times New Roman", serif; color: #14181c; padding-right: 1px; }
.watermark { position: absolute; left: 1498px; top: 642px; color: rgba(172, 172, 172, .8); }
.watermark div { font-size: 28.600px; line-height: 42px; }
.watermark p { margin: 0; font-size: 20.900px; line-height: 28px; }
.scroll { width: 25px; background: #f0f0f0; display: flex; flex-direction: column; align-items: center; padding: 10px 0 9px; }
.thumb { width: 21px; height: 573px; background: #c1c1c1; margin: 96px 0 auto; }

/* taskbar */
.taskbar { height: 60px; flex: none; background: #344746; display: flex; color: #fff; }
.win { width: 72px; display: flex; align-items: center; justify-content: center; }
.search { width: 432px; background: #f1f1f1; border: 2px solid #c0c0c0; display: flex; align-items: center; padding-left: 16px; color: #2b2b2b; font-size: 21.400px; }
.search .t { margin: 2px 0 0 18px; width: 198px; }
.art { margin: 6px 0 0 66px; }
.app { display: flex; align-items: center; justify-content: center; }
.on { border-bottom: 3px solid #76b9ed; padding-top: 3px; }
.cort, .tv { width: 72px; }
.fe { width: 86px; padding-right: 4px; }
.fx { width: 61px; padding-right: 2px; }
.ch { width: 66px; margin-left: 8px; background: #5e6f6e; }
.ch svg { margin-left: 5px; margin-top: 3px; }
.ch-more { width: 7px; border-left: 2px solid #3a4545; background: #4d5f5e; border-bottom: 3px solid #6aa9da; }
.vs { width: 61px; margin-left: 8px; padding-right: 2px; }
.tray { display: flex; align-items: center; margin-left: auto; }
.weather { display: flex; align-items: center; gap: 13px; font-size: 20.500px; width: 261px; }
.ar { width: 213px; font-family: "DejaVu Sans", sans-serif; }
.chev { margin-left: 39px; }
.wifi { margin-left: 18px; }
.bat { margin-left: 14px; }
.meet { margin-left: 14px; }
.spk { margin-left: 15px; }
.clock { width: 90px; margin-left: 14px; display: flex; flex-direction: column; align-items: center; font-size: 17.600px; line-height: 28px; }
.note { margin-left: 25px; }
.cop { margin-left: 32px; }
.peek { width: 1px; height: 60px; background: #8f9a9a; margin: 0 7px 0 24px; }
```
FILE: script.js
```js
const rows = [
  "9944662102827563", "1155283958629023", "3762575803420129", "6552663605838338",
  "6625374969249700", "7992959383006481", "8127009363498186", "3785026772667798"
];
const board = document.getElementById("board");
for (const digit of rows.join("")) {
  const cell = document.createElement("div");
  cell.className = "cell";
  cell.textContent = digit;
  board.append(cell);
}
```
